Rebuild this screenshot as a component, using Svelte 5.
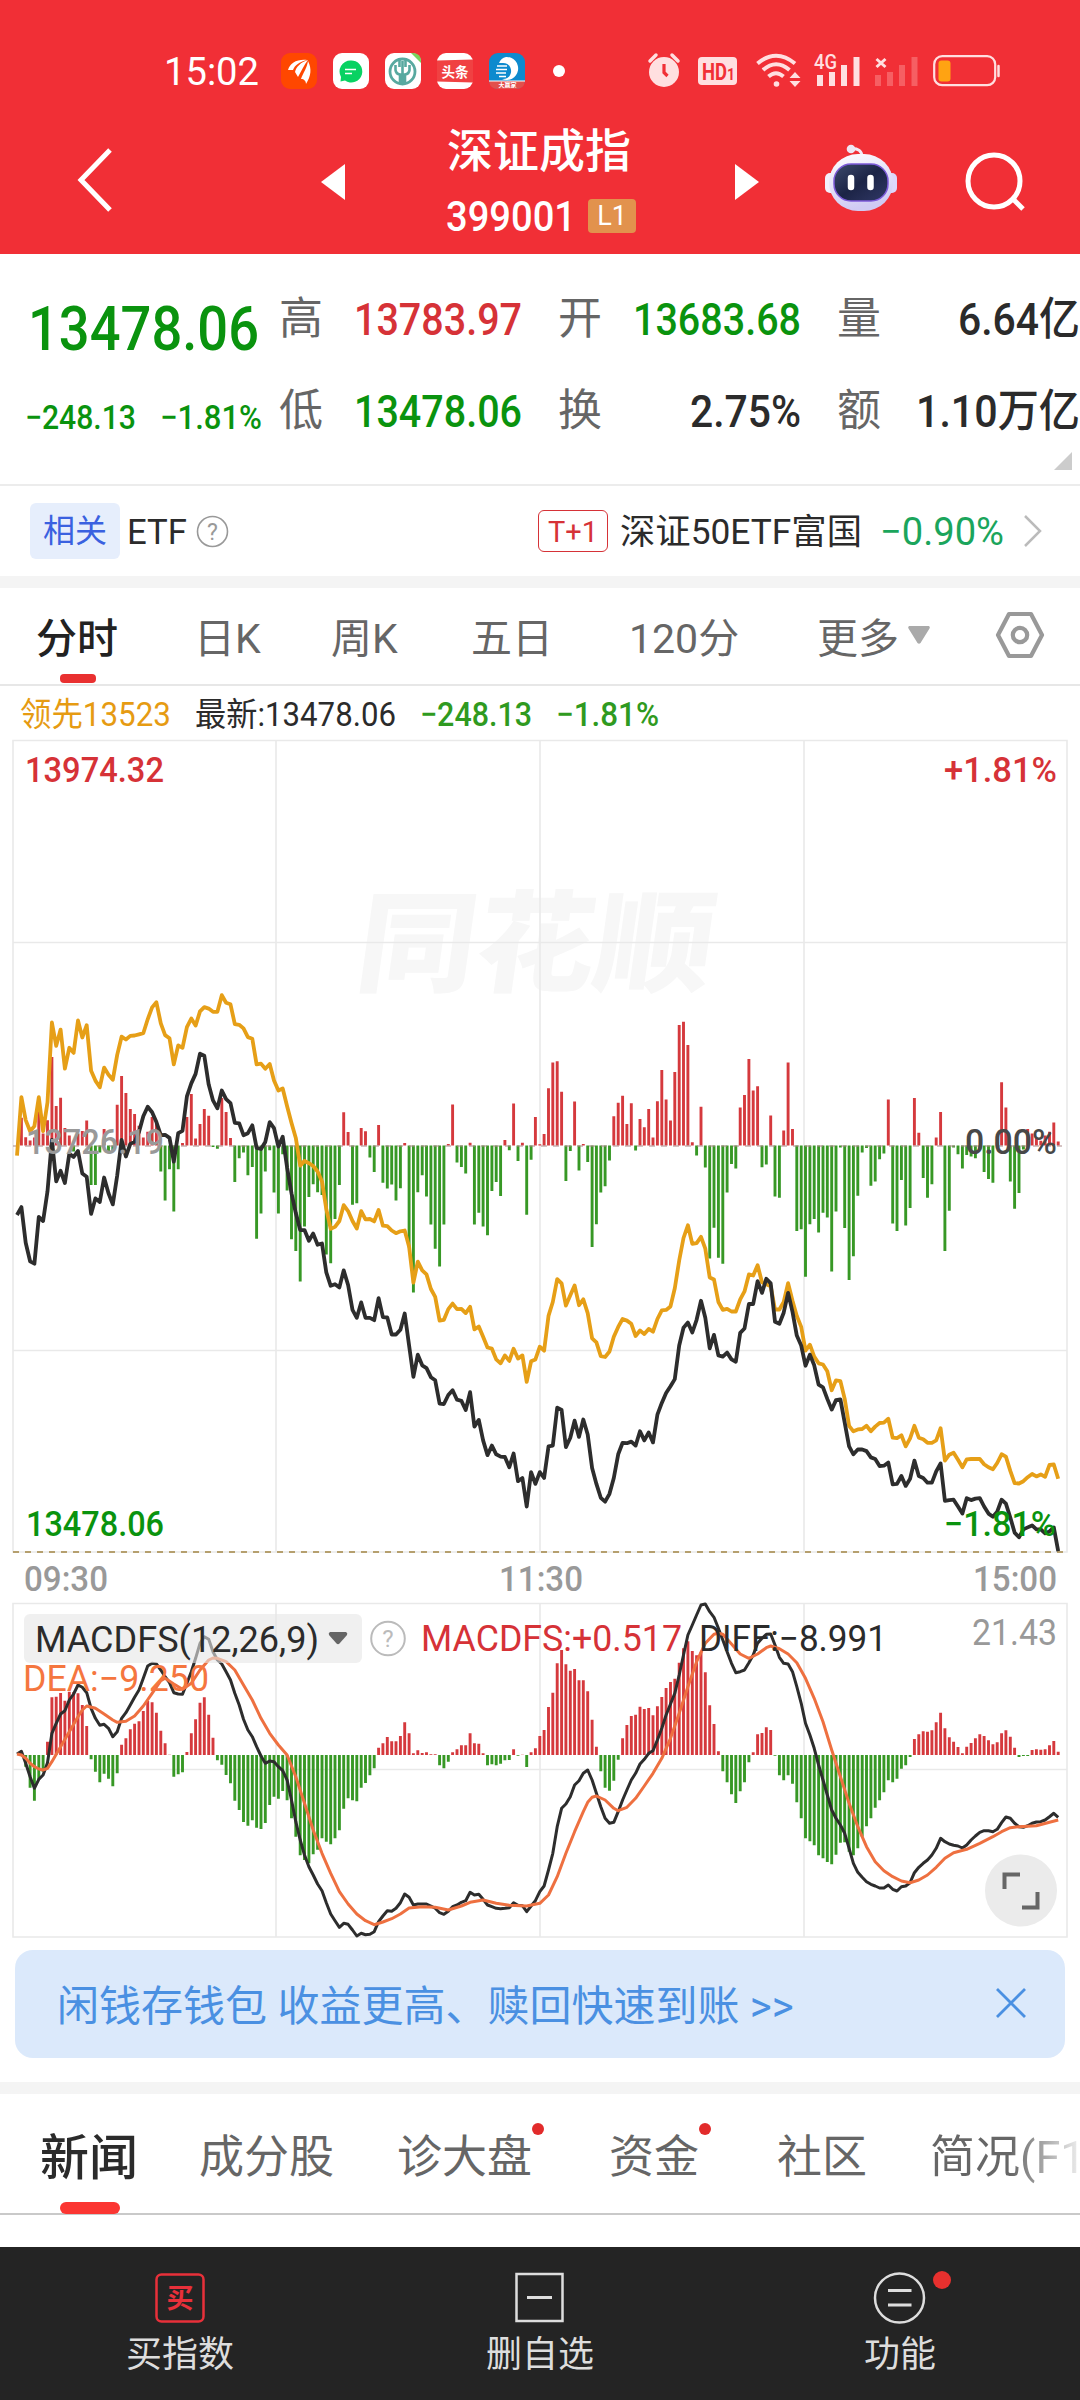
<script lang="ts">
  type Stat = { label: string; value: string; tone: string; width: number };

  // Two rows of three, read left to right
  const stats: Stat[] = [
    { label: '高', value: '13783.97', tone: 'up', width: 168 },
    { label: '开', value: '13683.68', tone: 'down', width: 168 },
    { label: '量', value: '6.64亿', tone: 'plain', width: 122 },
    { label: '低', value: '13478.06', tone: 'down', width: 168 },
    { label: '换', value: '2.75%', tone: 'plain', width: 111 },
    { label: '额', value: '1.10万亿', tone: 'plain', width: 164 },
  ];

  const periods = ['分时', '日K', '周K', '五日', '120分'];

  const sections = [
    { name: '新闻', dot: false },
    { name: '成分股', dot: false },
    { name: '诊大盘', dot: true },
    { name: '资金', dot: true },
    { name: '社区', dot: false },
    { name: '简况(F10)', dot: false },
  ];

  // One value per trading minute, 240 in a session
  const volume = [
    0, 70, 21, 13, 20, 100, 30, 64, 224, 100, 121, 44, 25, -15, 30, 37, 63, -100, -100, -18,
    42, -18, -12, 103, 176, 133, 92, 80, 50, 20, 35, 72, 55, -66, -139, -60, -167, -60, 6, 72,
    130, 18, 54, 92, 75, -4, -8, 120, 85, 19, -92, -32, -18, -75, -54, -236, -172, -66, -12, -119,
    -172, -22, -114, -237, -267, -344, -205, -130, -98, -118, -125, -276, -298, -186, -100, 84, 34, -150, -146, 44,
    36, -30, -67, 52, -94, -109, -99, -139, -108, 6, -258, -372, -118, -75, -129, -200, -261, -306, -200, 4,
    104, -43, -54, -71, 7, -200, -170, -205, -227, -115, -92, -128, 14, -12, 106, -39, 7, -175, -36, 72,
    3, 29, 145, 210, 213, 136, -90, -14, 111, -63, 4, -42, -257, -199, -119, -103, -38, 74, 108, 126,
    54, 107, -13, 67, 46, 92, 20, 112, 191, 116, 63, 186, 305, 313, 254, 8, -25, 98, -56, -286,
    -208, -284, -299, -119, -47, -58, 96, 128, 219, 139, 150, -55, -48, 76, -129, -132, 38, 210, 42, -216,
    -212, -332, -199, -186, -220, -170, -182, -319, -167, -5, -209, -340, -280, -127, -18, -6, -102, -91, -35, -20,
    116, -197, -216, -87, -202, -158, 120, 32, -82, -132, -98, 20, 85, -267, -165, -5, -22, -58, -24, -28,
    -32, -10, -67, -85, -94, 8, 160, 96, -91, -160, -120, -10, 42, 30, 20, 12, 25, 35, 58, 10,
  ];

  const lead = [
    495, 347, 405, 433, 420, 347, 433, 360, 158, 217, 176, 275, 222, 235, 153, 196, 165, 280, 305, 322,
    272, 290, 303, 240, 194, 201, 192, 191, 188, 185, 150, 120, 107, 160, 190, 198, 264, 216, 222, 170,
    148, 166, 130, 119, 123, 131, 131, 89, 108, 112, 162, 164, 173, 195, 199, 264, 262, 275, 263, 305,
    330, 325, 370, 412, 450, 520, 508, 514, 521, 535, 560, 630, 680, 675, 660, 620, 635, 660, 679, 635,
    656, 655, 661, 632, 672, 673, 684, 691, 686, 684, 725, 816, 763, 785, 795, 832, 852, 912, 910, 883,
    869, 883, 882, 893, 877, 934, 927, 953, 980, 983, 1010, 1020, 1000, 1014, 983, 1008, 1000, 1067, 1015, 1010,
    978, 988, 900, 865, 807, 818, 874, 848, 823, 873, 858, 893, 957, 967, 1002, 1004, 990, 953, 928, 908,
    912, 920, 951, 937, 946, 933, 940, 908, 886, 885, 876, 830, 760, 703, 671, 718, 716, 700, 730, 803,
    808, 865, 885, 882, 889, 889, 858, 838, 795, 798, 772, 815, 820, 825, 884, 884, 865, 817, 862, 900,
    928, 988, 973, 1003, 1020, 1023, 1040, 1088, 1063, 1065, 1110, 1178, 1192, 1187, 1186, 1178, 1192, 1180, 1171, 1170,
    1160, 1208, 1209, 1202, 1230, 1210, 1178, 1208, 1212, 1221, 1221, 1215, 1184, 1266, 1251, 1246, 1264, 1283, 1263, 1262,
    1262, 1262, 1275, 1283, 1288, 1272, 1250, 1256, 1292, 1323, 1324, 1318, 1308, 1300, 1306, 1301, 1307, 1277, 1276, 1312,
  ];

  const price = [
    645, 625, 715, 762, 768, 650, 660, 585, 455, 560, 533, 564, 490, 498, 483, 540, 548, 642, 603, 612,
    550, 590, 618, 545, 455, 497, 465, 460, 435, 395, 371, 385, 410, 443, 442, 450, 510, 438, 432, 345,
    312, 288, 237, 242, 315, 355, 375, 330, 352, 362, 412, 413, 443, 438, 418, 475, 478, 460, 410, 425,
    472, 447, 525, 590, 640, 683, 683, 710, 692, 720, 717, 790, 824, 820, 828, 785, 822, 885, 905, 866,
    905, 905, 911, 855, 903, 904, 947, 947, 935, 894, 975, 1054, 998, 1025, 1032, 1055, 1063, 1122, 1123, 1100,
    1088, 1112, 1115, 1138, 1093, 1180, 1163, 1215, 1252, 1228, 1250, 1256, 1257, 1283, 1248, 1318, 1310, 1382, 1295, 1325,
    1295, 1310, 1230, 1228, 1132, 1138, 1232, 1208, 1165, 1206, 1162, 1200, 1285, 1325, 1360, 1370, 1350, 1310, 1250, 1221,
    1222, 1218, 1228, 1192, 1215, 1195, 1220, 1150, 1120, 1095, 1078, 1060, 975, 930, 917, 942, 910, 862, 905, 982,
    948, 1000, 1003, 993, 1010, 1016, 943, 932, 870, 870, 812, 842, 806, 818, 915, 920, 892, 842, 890, 950,
    975, 1026, 998, 1025, 1074, 1081, 1110, 1137, 1113, 1111, 1170, 1230, 1250, 1238, 1238, 1242, 1258, 1262, 1280, 1279,
    1271, 1326, 1325, 1305, 1330, 1312, 1266, 1305, 1310, 1322, 1322, 1293, 1273, 1368, 1366, 1365, 1382, 1400, 1361, 1366,
    1362, 1361, 1382, 1400, 1408, 1395, 1365, 1375, 1410, 1448, 1460, 1440, 1435, 1430, 1440, 1440, 1450, 1445, 1435, 1495,
  ];

  const macd = [
    0, 0, -35, -98, -137, -75, -50, 40, 173, 175, 186, 163, 190, 188, 185, 150, 87, -13, -50, -82,
    -56, -71, -94, -55, 31, 50, 77, 94, 101, 132, 162, 158, 127, 73, 35, 1, -65, -58, -52, 9,
    65, 107, 157, 173, 121, 52, -16, -29, -60, -85, -137, -165, -201, -212, -196, -218, -222, -204, -150, -125,
    -131, -108, -136, -190, -245, -301, -315, -325, -298, -284, -250, -260, -268, -250, -226, -161, -130, -136, -139, -98,
    -84, -61, -40, 22, 35, 54, 41, 41, 57, 98, 65, 5, 14, 6, 8, 2, 2, -31, -40, -20,
    8, 17, 29, 29, 65, 35, 34, 5, -31, -28, -31, -26, -16, -15, 17, -2, 1, -36, 8, 20,
    57, 75, 144, 187, 275, 315, 272, 253, 258, 224, 224, 191, 106, 25, -49, -98, -107, -77, -14, 50,
    90, 117, 121, 145, 138, 141, 119, 146, 174, 201, 219, 229, 277, 320, 341, 312, 299, 310, 248, 149,
    93, 11, -49, -82, -118, -144, -109, -82, -22, 8, 62, 66, 83, 75, -2, -61, -76, -61, -86, -142,
    -190, -250, -259, -271, -301, -310, -321, -328, -299, -263, -262, -290, -301, -280, -245, -214, -190, -158, -136, -112,
    -76, -82, -71, -41, -31, -6, 48, 62, 71, 70, 74, 98, 127, 80, 53, 40, 24, 5, 25, 36,
    50, 62, 57, 44, 32, 38, 65, 74, 55, 22, -6, -3, -3, 15, 17, 16, 17, 29, 42, 10,
  ];

  const diff = [
    522, 514, 550, 590, 625, 598, 585, 548, 460, 430, 402, 392, 360, 342, 315, 322, 338, 385, 415, 436,
    433, 445, 470, 455, 415, 398, 375, 352, 330, 295, 258, 250, 252, 270, 290, 308, 338, 342, 343, 310,
    275, 235, 190, 170, 178, 215, 240, 252, 275, 300, 340, 375, 418, 450, 470, 500, 528, 550, 543, 545,
    560, 572, 600, 660, 725, 780, 825, 860, 885, 912, 932, 968, 1002, 1022, 1042, 1030, 1033, 1050, 1068, 1060,
    1064, 1063, 1055, 1025, 1008, 992, 994, 985, 968, 942, 952, 975, 972, 972, 972, 978, 985, 998, 1003, 994,
    980, 975, 967, 962, 937, 945, 943, 958, 975, 980, 985, 986, 985, 983, 968, 976, 977, 995, 978, 962,
    935, 918, 870, 820, 740, 685, 672, 650, 615, 602, 580, 570, 600, 640, 680, 715, 730, 727, 695, 660,
    630, 600, 580, 552, 538, 520, 512, 480, 445, 405, 372, 340, 285, 225, 165, 135, 105, 75, 72, 95,
    112, 145, 180, 215, 250, 278, 275, 270, 248, 225, 190, 175, 163, 162, 195, 232, 250, 252, 275, 320,
    370, 430, 465, 505, 555, 600, 645, 690, 715, 735, 760, 805, 850, 877, 892, 905, 913, 918, 924, 924,
    915, 928, 933, 920, 918, 908, 878, 862, 850, 840, 825, 805, 775, 785, 792, 796, 798, 804, 795, 780,
    768, 757, 752, 752, 755, 748, 728, 711, 715, 730, 740, 742, 737, 730, 726, 725, 720, 710, 700, 712,
  ];

  // The signal line is smooth, so only its knots are kept: [minute, y]
  const dea = [
    [0, 522], [1, 525], [2, 535], [3, 550], [4, 560], [5, 567], [6, 570], [7, 565], [8, 545], [10, 500],
    [12, 455], [14, 410], [15, 390], [16, 378], [18, 385], [20, 402], [22, 420], [23, 427], [25, 424], [27, 408],
    [29, 378], [31, 340], [33, 302], [34, 295], [36, 312], [38, 328], [40, 310], [42, 270], [44, 240], [45, 234],
    [46, 235], [48, 245], [50, 270], [52, 315], [54, 360], [56, 415], [58, 460], [60, 495], [62, 525], [64, 590],
    [66, 670], [68, 750], [70, 820], [72, 880], [74, 935], [76, 972], [78, 1002], [80, 1022], [82, 1034], [84, 1026],
    [86, 1016], [88, 1002], [90, 984], [93, 980], [96, 982], [99, 990], [102, 978], [104, 967], [107, 960], [110, 970],
    [113, 976], [117, 978], [120, 970], [122, 945], [124, 890], [126, 820], [128, 755], [130, 695], [131, 667], [132, 652],
    [133, 648], [135, 660], [137, 685], [138, 692], [140, 682], [142, 655], [144, 618], [146, 580], [148, 535], [150, 475],
    [152, 400], [154, 320], [156, 245], [158, 190], [160, 163], [161, 160], [162, 163], [164, 192], [166, 222], [168, 235],
    [170, 222], [172, 203], [173, 198], [175, 206], [177, 222], [179, 248], [181, 295], [183, 355], [185, 425], [187, 510],
    [189, 590], [191, 670], [193, 740], [195, 800], [197, 845], [199, 872], [201, 890], [203, 903], [205, 908], [207, 900],
    [209, 885], [211, 862], [213, 835], [215, 818], [218, 808], [221, 790], [224, 770], [226, 755], [228, 743], [230, 740],
    [234, 737], [237, 727], [239, 720],
  ];

  const STEP = 4.3565;
  const PRICE_SCALE = 2.529;
  const MACD_SCALE = 3;

  const x = (i: number) => 17 + i * STEP;
  const priceY = (v: number) => 220 + v / PRICE_SCALE;
  const macdY = (v: number) => v / MACD_SCALE - 23;

  const line = (pts: number[][], y: (v: number) => number) =>
    pts.map(([i, v]) => `${x(i).toFixed(1)},${y(v).toFixed(1)}`).join(' ');
  const series = (values: number[], y: (v: number) => number) =>
    line(values.map((v, i) => [i, v]), y);

  // All bars of one colour go into a single path
  const bars = (values: number[], sign: number, zero: number, scale: number) =>
    values
      .map((v, i) => (v * sign > 0 ? `M${x(i).toFixed(1)} ${zero}V${(zero - v / scale).toFixed(1)}` : ''))
      .join('');
</script>

{#snippet fit(text: string, width: number, size: number)}
  <svg class="fit" {width} height={size} font-size={size}>
    <text x="0" y={size * 0.855} textLength={width} lengthAdjust="spacingAndGlyphs">{text}</text>
  </svg>
{/snippet}

<div class="app">
  <header>
    <div class="status">
      <div class="apps">
        {@render fit('15:02', 95, 38)}
        <svg class="first" width="36" height="36" viewBox="0 0 36 36">
          <rect width="36" height="36" rx="9" fill="#ff4700" />
          <path d="M7 17C9 10 16 6 26 7C18 9 14 12 12 17ZM14 19C15 14 20 9 27 7C23 12 21 17 17 24ZM20 26C22 20 26 15 27 8C31 16 30 23 25 31C25 28 23 26 20 26Z" fill="#fff" />
        </svg>
        <svg width="36" height="36" viewBox="0 0 36 36">
          <rect width="36" height="36" rx="9" fill="#fff" />
          <path d="M17.500 7.500A11 11 0 1 1 12 27.500L7.500 28.500L8 24A11 11 0 0 1 17.500 7.500Z" fill="#08d262" />
          <path d="M12 16.500H23M12 20.500H19" stroke="#fff" stroke-width="1.600" />
        </svg>
        <svg width="36" height="36" viewBox="0 0 36 36">
          <rect width="36" height="36" rx="9" fill="#fff" />
          <circle cx="17.500" cy="18.500" r="12.500" fill="none" stroke="#58a9a0" stroke-width="2.800" />
          <path d="M14.500 5V14M20.500 5V14M10.500 12V17Q11 21 15 21.500V30M24.500 12V17Q24 21 20 21.500V30M17.500 8V31" fill="none" stroke="#58a9a0" stroke-width="2.600" />
          <path d="M26 0H29Q36 1 36 8V10Z" fill="#79d25d" />
        </svg>
        <svg width="36" height="36" viewBox="0 0 36 36">
          <rect width="36" height="36" rx="9" fill="#fff" />
          <path d="M0 7.500L36 6.500V29.500L0 28.500Z" fill="#f04142" />
          <text class="badge-text" x="4.500" y="23.500" font-size="13.500">头条</text>
        </svg>
        <svg width="36" height="36" viewBox="0 0 36 36">
          <rect width="36" height="36" rx="9" fill="#0d8ace" />
          <path d="M0 28H36Q35 36 27 36H9Q1 36 0 28Z" fill="#e2504c" />
          <path d="M0 28H36" stroke="#fff" />
          <path d="M17 4A11.500 11.500 0 1 1 13 26C25 27 25 10 14 10H10Q12 5 17 4Z" fill="#fff" />
          <path d="M8 13H18M7 16.500H18M7 20H17M10 23.500H17" stroke="#fff" stroke-width="1.500" />
          <text class="badge-text" x="9.500" y="34" font-size="6">大赢家</text>
        </svg>
        <span class="more-dot"></span>
      </div>
      <div class="system">
        <svg width="36" height="36" viewBox="0 0 36 36">
          <circle cx="16" cy="19" r="15" fill="#ffdfe0" />
          <path d="M2 8L8 2M24 2L30 8" stroke="#ffdfe0" stroke-width="3.500" stroke-linecap="round" />
          <path d="M16 11V19.500L19.500 23" fill="none" stroke="#f12f36" stroke-width="3.200" />
        </svg>
        <svg width="40" height="36" viewBox="0 0 40 36">
          <rect y="4" width="39" height="28" rx="4" fill="#ffdfe0" />
          <text class="hd" x="4" y="26.500" font-size="23" textLength="25" lengthAdjust="spacingAndGlyphs">HD</text>
          <text class="hd" x="29" y="26.500" font-size="16" textLength="8" lengthAdjust="spacingAndGlyphs">1</text>
        </svg>
        <svg width="48" height="36" viewBox="0 0 48 36" fill="none" stroke="#ffdfe0" stroke-width="4">
          <path d="M5.500 10.500Q24 -5 43 10.500M11 17Q24 5.500 37.500 17M16.500 23.500Q24 17 31.500 23.500" />
          <circle cx="24.500" cy="31" r="2.800" fill="#ffdfe0" stroke="none" />
          <path d="M37.500 25L43 19L48.500 25ZM37.500 28L43 34L48.500 28Z" fill="#ffdfe0" stroke="none" />
        </svg>
        <svg width="47" height="36" viewBox="0 0 47 36">
          <path d="M6 33V22M18 33V19M30 33V12M42.500 33V4" stroke="#ffdfe0" stroke-width="6" />
          <text class="net" x="0" y="16" font-size="20" textLength="23" lengthAdjust="spacingAndGlyphs">4G</text>
        </svg>
        <svg width="44" height="36" viewBox="0 0 44 36">
          <path d="M3 33V22M15 33V19M27 33V12M39.500 33V4" stroke="#f65f63" stroke-width="6" />
          <path d="M1.500 6L10.500 14M10.500 6L1.500 14" stroke="#ffdfe0" stroke-width="3" />
        </svg>
        <svg width="68" height="36" viewBox="0 0 68 36">
          <rect x="1.200" y="3.200" width="61" height="29" rx="8" fill="none" stroke="#ffdfe0" stroke-width="2.200" />
          <rect x="5.500" y="7.500" width="12" height="21" rx="3" fill="#ffa312" />
          <path d="M65.500 13V23" stroke="#ffdfe0" stroke-width="2.500" stroke-linecap="round" />
        </svg>
      </div>
    </div>
    <div class="nav">
      <svg class="back" width="38" height="68" viewBox="0 0 38 68"><path d="M33 4L4 34L33 64" fill="none" stroke="#fff" stroke-width="5" /></svg>
      <svg width="24" height="36" viewBox="0 0 24 36"><path d="M24 0V36L0 18Z" fill="#fff" /></svg>
      <div class="title">
        <h1>深证成指</h1>
        <div class="code">{@render fit('399001', 130, 42)}<span class="level">L1</span></div>
      </div>
      <svg width="24" height="36" viewBox="0 0 24 36"><path d="M0 0V36L24 18Z" fill="#fff" /></svg>
      <svg class="robot" width="74" height="70" viewBox="0 0 74 70">
        <defs>
          <linearGradient id="shell" x1="0" y1="0" x2="0.300" y2="1">
            <stop offset="0" stop-color="#fff" />
            <stop offset="1" stop-color="#cfcaf3" />
          </linearGradient>
          <linearGradient id="visor" x1="0" y1="0" x2="1" y2="1">
            <stop offset="0" stop-color="#3c4a6c" />
            <stop offset="0.500" stop-color="#1c2446" />
            <stop offset="1" stop-color="#303866" />
          </linearGradient>
        </defs>
        <path d="M38 14Q38 5 27 5.500" fill="none" stroke="#f3e9f5" stroke-width="3" />
        <circle cx="27" cy="6" r="4.300" fill="#eee6f4" />
        <rect x="1" y="30" width="12" height="20" rx="5" fill="#f3f0fc" />
        <rect x="61" y="30" width="12" height="20" rx="5" fill="#ddd7fa" />
        <rect x="5" y="11" width="64" height="57" rx="29" fill="url(#shell)" />
        <rect x="10" y="21" width="54" height="37" rx="17" fill="url(#visor)" stroke="#7c5ad8" stroke-width="1.500" />
        <path d="M27 35V44M46.500 35V44" stroke="#fff" stroke-width="6.500" stroke-linecap="round" />
      </svg>
      <svg width="62" height="62" viewBox="0 0 62 62" fill="none" stroke="#fff" stroke-width="5">
        <circle cx="31" cy="30" r="26" /><path d="M50 48L60 58" />
      </svg>
    </div>
  </header>

  <section class="quote">
    <div class="last">
      {@render fit('13478.06', 231, 62)}
      <div class="change">{@render fit('−248.13', 111, 34)}{@render fit('−1.81%', 102, 34)}</div>
    </div>
    <div class="stats">
      {#each stats as s}
        <div class="stat"><span>{s.label}</span><b class={s.tone}>{@render fit(s.value, s.width, 45)}</b></div>
      {/each}
      <i class="corner"></i>
    </div>
  </section>

  <section class="etf">
    <span class="tag">相关</span>
    <span class="kind">{@render fit('ETF', 60, 35)}</span>
    <svg width="33" height="33" viewBox="0 0 33 33"><circle cx="16.500" cy="16.500" r="15" fill="none" stroke="#999" stroke-width="1.600" /><text x="16.500" y="24.500" font-size="23" text-anchor="middle" fill="#999">?</text></svg>
    <span class="t1">{@render fit('T+1', 50, 30)}</span>
    <span class="fund">{@render fit('深证50ETF富国', 242, 35)}</span>
    <span class="pct">{@render fit('−0.90%', 124, 39)}</span>
    <svg width="20" height="34" viewBox="0 0 20 34"><path d="M2 2L17 17L2 32" fill="none" stroke="#bbb" stroke-width="2.500" /></svg>
  </section>

  <nav class="periods">
    {#each periods as p, i}
      <span class:active={i === 0}>{p}</span>
    {/each}
    <span class="more">更多<svg width="22" height="18" viewBox="0 0 22 18"><path d="M1 0H21Q22.500 1 21.500 2.500L12.500 17Q11 18.500 9.500 17L.5 2.500Q-.5 1 1 0Z" fill="#aaa" /></svg></span>
    <svg width="50" height="48" viewBox="0 0 50 48" fill="none" stroke="#999" stroke-width="4.200" stroke-linejoin="round">
      <path d="M14 3H36L47 24L36 45H14L3 24Z" /><circle cx="25" cy="24" r="7.200" />
    </svg>
  </nav>

  <div class="ticker">
    <span class="lead">{@render fit('领先13523', 151, 33)}</span>
    <span class="plain">{@render fit('最新:13478.06', 201, 33)}</span>
    <span class="fall">{@render fit('−248.13', 112, 34)}</span>
    <span class="fall">{@render fit('−1.81%', 103, 34)}</span>
  </div>

  <svg class="chart" width="1080" height="863" viewBox="0 740 1080 863">
    <text class="watermark" transform="translate(353 983) skewX(-8)" font-size="110" textLength="356" lengthAdjust="spacingAndGlyphs">同花顺</text>
    <path class="grid" d="M13 740.500H1067V1552H13ZM13 942.500H1067M13 1350.500H1067M276 740V1552M540 740V1552M804 740V1552" />
    <g transform="translate(0 740)">
      <path class="up-bars" d={bars(volume, 1, 405.5, PRICE_SCALE)} />
      <path class="down-bars" d={bars(volume, -1, 405.5, PRICE_SCALE)} />
      <path d="M13 406H1062" stroke="#a88" stroke-width="1.200" stroke-dasharray="6 6" />
      <path d="M13 812H1067" stroke="#b59f6e" stroke-width="1.800" stroke-dasharray="6 6" />
      <polyline class="curve" stroke="#e69f17" points={series(lead, priceY)} />
      <polyline class="curve" stroke="#2d2d2d" points={series(price, priceY)} />
    </g>
    <g class="labels" font-size="35">
      <text class="up" x="25" y="782" textLength="139" lengthAdjust="spacingAndGlyphs">13974.32</text>
      <text class="up" x="944" y="782" textLength="113" lengthAdjust="spacingAndGlyphs">+1.81%</text>
      <text class="muted" x="26" y="1154" textLength="138" lengthAdjust="spacingAndGlyphs">13726.19</text>
      <text fill="#484848" x="965" y="1154" textLength="92" lengthAdjust="spacingAndGlyphs">0.00%</text>
      <text class="down" x="26" y="1536" textLength="138" lengthAdjust="spacingAndGlyphs">13478.06</text>
      <text class="down" x="944" y="1536" textLength="112" lengthAdjust="spacingAndGlyphs">−1.81%</text>
      <g class="muted">
        <text x="24" y="1591" textLength="84" lengthAdjust="spacingAndGlyphs">09:30</text>
        <text x="499" y="1591" textLength="84" lengthAdjust="spacingAndGlyphs">11:30</text>
        <text x="973" y="1591" textLength="84" lengthAdjust="spacingAndGlyphs">15:00</text>
      </g>
    </g>
  </svg>

  <svg class="macd" width="1080" height="347" viewBox="0 0 1080 347">
    <path class="grid" d="M13 .5H1067V334H13ZM13 166.500H1067M276 0V334M540 0V334M804 0V334" />
    <path class="up-bars" d={bars(macd, 1, 152, MACD_SCALE)} />
    <path class="down-bars" d={bars(macd, -1, 152, MACD_SCALE)} />
    <polyline class="curve thin" stroke="#2d2d2d" points={series(diff, macdY)} />
    <polyline class="curve thin" stroke="#ee7040" points={line(dea, macdY)} />
    <rect x="24" y="11" width="338" height="49" rx="6" fill="#e6e6e6" fill-opacity="0.600" />
    <path d="M330 29H346Q348 30 347 32L339.500 40.500Q338 42 336.500 40.500L329 32Q328 30 330 29Z" fill="#666" />
    <circle cx="388" cy="35.500" r="16.800" fill="none" stroke="#bbb" stroke-width="2" />
    <text x="388" y="44" font-size="24" text-anchor="middle" fill="#bbb">?</text>
    <g font-size="36">
      <text class="plain" x="35" y="49" textLength="284" lengthAdjust="spacingAndGlyphs">MACDFS(12,26,9)</text>
      <text class="up" x="421" y="48" textLength="261" lengthAdjust="spacingAndGlyphs">MACDFS:+0.517</text>
      <text class="plain" x="699" y="48" textLength="188" lengthAdjust="spacingAndGlyphs">DIFF:−8.991</text>
      <text fill="#f5763f" x="23" y="88" textLength="186" lengthAdjust="spacingAndGlyphs">DEA:−9.250</text>
      <text class="muted" x="972" y="42" textLength="85" lengthAdjust="spacingAndGlyphs">21.43</text>
    </g>
    <circle cx="1021" cy="287.500" r="36" fill="#ebebeb" />
    <path d="M1004.500 286V271.500H1020M1022 304.500H1037.500V289" fill="none" stroke="#666" stroke-width="4" />
  </svg>

  <div class="banner">
    <span>闲钱存钱包 收益更高、赎回快速到账 &gt;&gt;</span>
    <svg width="32" height="32" viewBox="0 0 32 32"><path d="M2 2L30 30M30 2L2 30" stroke="#4a90e2" stroke-width="2.800" /></svg>
  </div>

  <nav class="sections">
    {#each sections as s, i}
      <span class:active={i === 0} class:last-tab={i === 5} class:dot={s.dot}>{s.name}</span>
    {/each}
  </nav>

  <footer>
    <div class="action">
      <svg width="52" height="52" viewBox="0 0 52 52">
        <rect x="2.500" y="2.500" width="47" height="47" rx="5" fill="none" stroke="#e8303a" stroke-width="2.500" />
        <text class="buy" x="12.500" y="36" font-size="27">买</text>
      </svg>
      <span>买指数</span>
    </div>
    <div class="action">
      <svg width="52" height="52" viewBox="0 0 52 52" fill="none" stroke="#ddd" stroke-width="2.500">
        <rect x="2.500" y="2" width="46" height="47" /><path d="M13 25.500H38" stroke-width="3" />
      </svg>
      <span>删自选</span>
    </div>
    <div class="action alert">
      <svg width="52" height="52" viewBox="0 0 52 52" fill="none" stroke="#ddd" stroke-width="2.500">
        <circle cx="25.500" cy="26" r="24.500" /><path d="M14 18.500H37.500M14 33H37.500" stroke-width="3" />
      </svg>
      <span>功能</span>
    </div>
  </footer>
</div>

<style>
  :global(body) { background: #fff; }
  .app {
    width: 1080px;
    height: 2400px;
    overflow: hidden;
    display: flex;
    flex-direction: column;
    font-family: Roboto, "Noto Sans CJK SC", sans-serif;
    color: #2b2b2b;
  }
  .app > * { flex-shrink: 0; box-sizing: border-box; }
  svg { display: block; flex-shrink: 0; overflow: visible; }
  .fit { fill: currentColor; }

  .up { color: #d63237; fill: #d63237; }
  .down { color: #0a930e; fill: #0a930e; }
  .plain { color: #2b2b2b; fill: #2b2b2b; }
  .muted { fill: #999; }

  /* Header */
  header {
    height: 254px;
    background: #f12f36;
    color: #fff;
  }
  .status {
    height: 114px;
    padding: 28px 79px 0 164px;
    display: flex;
    justify-content: space-between;
    box-sizing: border-box;
  }
  .apps, .system { display: flex; align-items: center; height: 86px; }
  .apps { gap: 16px; }
  .system { gap: 14px; }
  .first { margin-left: 6px; }
  .badge-text { fill: #fff; font-weight: 700; }
  .hd { fill: #f12f36; font-weight: 700; }
  .net { fill: #ffdfe0; font-weight: 500; }
  .more-dot {
    width: 12px;
    height: 12px;
    margin-left: 12px;
    border-radius: 50%;
    background: #fff;
  }
  .nav {
    height: 140px;
    display: grid;
    grid-template-columns: 244px 102px 312px 89px 139px 62px;
    padding-left: 77px;
    align-items: center;
  }
  .nav > svg { margin-top: -5px; }
  .nav .back { margin-top: -9px; }
  .nav .robot { margin-top: -13px; }
  .title { padding-left: 24px; }
  h1 {
    margin: -3px 0 0;
    font-size: 46px;
    line-height: 60px;
    font-weight: 500;
  }
  .code { display: flex; align-items: center; gap: 12px; height: 56px; margin: 7px 0 0 -1px; font-weight: 500; }
  .level {
    width: 48px;
    height: 34px;
    border-radius: 4px;
    background: #e2924d;
    font-size: 27px;
    line-height: 35px;
    font-weight: 400;
    text-align: center;
  }

  /* Quote */
  .quote {
    height: 232px;
    padding-top: 19px;
    display: flex;
    border-bottom: 2px solid #ececec;
  }
  .last { width: 279px; padding: 24px 0 0 28px; box-sizing: border-box; color: #0a930e; font-weight: 500; }
  .change { display: flex; gap: 24px; margin: 41px 0 0 -3px; }
  .stats {
    position: relative;
    display: grid;
    grid-template-columns: repeat(3, 243px);
    grid-auto-rows: 92px;
    column-gap: 36px;
  }
  .stat { display: flex; align-items: center; justify-content: space-between; }
  .stat span { font-size: 44px; color: #666; line-height: 1; }
  .stat b { font-weight: 500; }
  .corner {
    position: absolute;
    right: 8px;
    bottom: 14px;
    border: solid transparent;
    border-width: 0 0 18px 18px;
    border-bottom-color: #ccc;
  }

  .etf {
    height: 102px;
    padding: 0 37px 12px 30px;
    display: flex;
    align-items: center;
    box-shadow: inset 0 -12px #f4f4f4;
  }
  .tag {
    width: 90px;
    height: 56px;
    border-radius: 6px;
    background: #e6eefc;
    color: #3a61e0;
    font-size: 32px;
    line-height: 57px;
    text-align: center;
  }
  .kind { margin: 0 9px 0 7px; }
  .t1 {
    width: 68px;
    height: 40px;
    margin-left: auto;
    border: 1.5px solid #d63237;
    border-radius: 6px;
    display: grid;
    place-items: center;
    color: #d63237;
  }
  .fund { margin: 0 18px 0 12px; }
  .pct { color: #1ba55c; margin-right: 19px; }

  .periods {
    height: 98px;
    padding: 0 0 3px 36px;
    display: grid;
    grid-template-columns: 158px 137px 140px 158px 188px 178px 50px;
    align-items: center;
    border-bottom: 2px solid #e7e7e7;
    font-size: 41px;
    color: #666;
  }
  .periods .active { color: #222; font-weight: 500; position: relative; width: 82px; }
  .periods .active::after {
    content: "";
    position: absolute;
    left: 24px;
    bottom: -18px;
    width: 36px;
    height: 9px;
    border-radius: 4px;
    background: #e93030;
  }
  .more { display: flex; align-items: center; gap: 9px; }

  .ticker { height: 54px; padding: 2px 0 0 20px; display: flex; align-items: center; }
  .ticker .plain { margin: 0 24px; }
  .lead { color: #e69b12; }
  .fall { color: #2f9a20; margin-right: 24px; font-weight: 500; }

  /* Charts */
  .watermark { fill: #f7f7f7; font-weight: 900; }
  .labels { font-weight: 500; }
  .grid { fill: none; stroke: #e9e9e9; stroke-width: 1.6; }
  .up-bars { stroke: #d5393d; stroke-width: 2.9; }
  .down-bars { stroke: #379825; stroke-width: 2.9; }
  .curve { fill: none; stroke-width: 3.8; stroke-linejoin: round; }
  .thin { stroke-width: 3; }

  .banner {
    height: 108px;
    margin: 0 15px;
    padding: 0 38px 3px 42px;
    display: flex;
    align-items: center;
    justify-content: space-between;
    border-radius: 18px;
    background: #dbe9fb;
    color: #4a90e2;
    font-size: 42px;
  }

  .sections {
    height: 133px;
    margin: 24px 0 32px;
    padding-left: 40px;
    display: grid;
    grid-template-columns: 159px 198px 212px 168px 153px 190px;
    align-items: center;
    border-top: 12px solid #f4f4f4;
    border-bottom: 2px solid #c9c9c9;
    font-size: 45px;
    color: #666;
    white-space: nowrap;
  }
  .sections span { position: relative; justify-self: start; }
  .sections .active { font-size: 49px; font-weight: 500; color: #2b2b2b; }
  .sections .active::after {
    content: "";
    position: absolute;
    left: 20px;
    bottom: -25px;
    width: 60px;
    height: 12px;
    border-radius: 6px;
    background: #fb3632;
  }
  .dot::after {
    content: "";
    position: absolute;
    top: 2px;
    right: -12px;
    width: 12px;
    height: 12px;
    border-radius: 50%;
    background: #e22b2b;
  }
  .sections .last-tab {
    background: linear-gradient(90deg, #666 80px, #eee 150px);
    background-clip: text;
    color: transparent;
  }

  footer {
    flex: 1;
    display: grid;
    grid-template-columns: repeat(3, 1fr);
    background: #242424;
    color: #ddd;
    font-size: 36px;
  }
  .action {
    display: flex;
    flex-direction: column;
    align-items: center;
    padding-top: 25px;
    position: relative;
  }
  .action span { line-height: 52px; margin-top: 5px; }
  .buy { fill: #e8303a; font-weight: 700; }
  .alert::after {
    content: "";
    position: absolute;
    left: 213px;
    top: 24px;
    width: 18px;
    height: 18px;
    border-radius: 50%;
    background: #e8302e;
  }
</style>
